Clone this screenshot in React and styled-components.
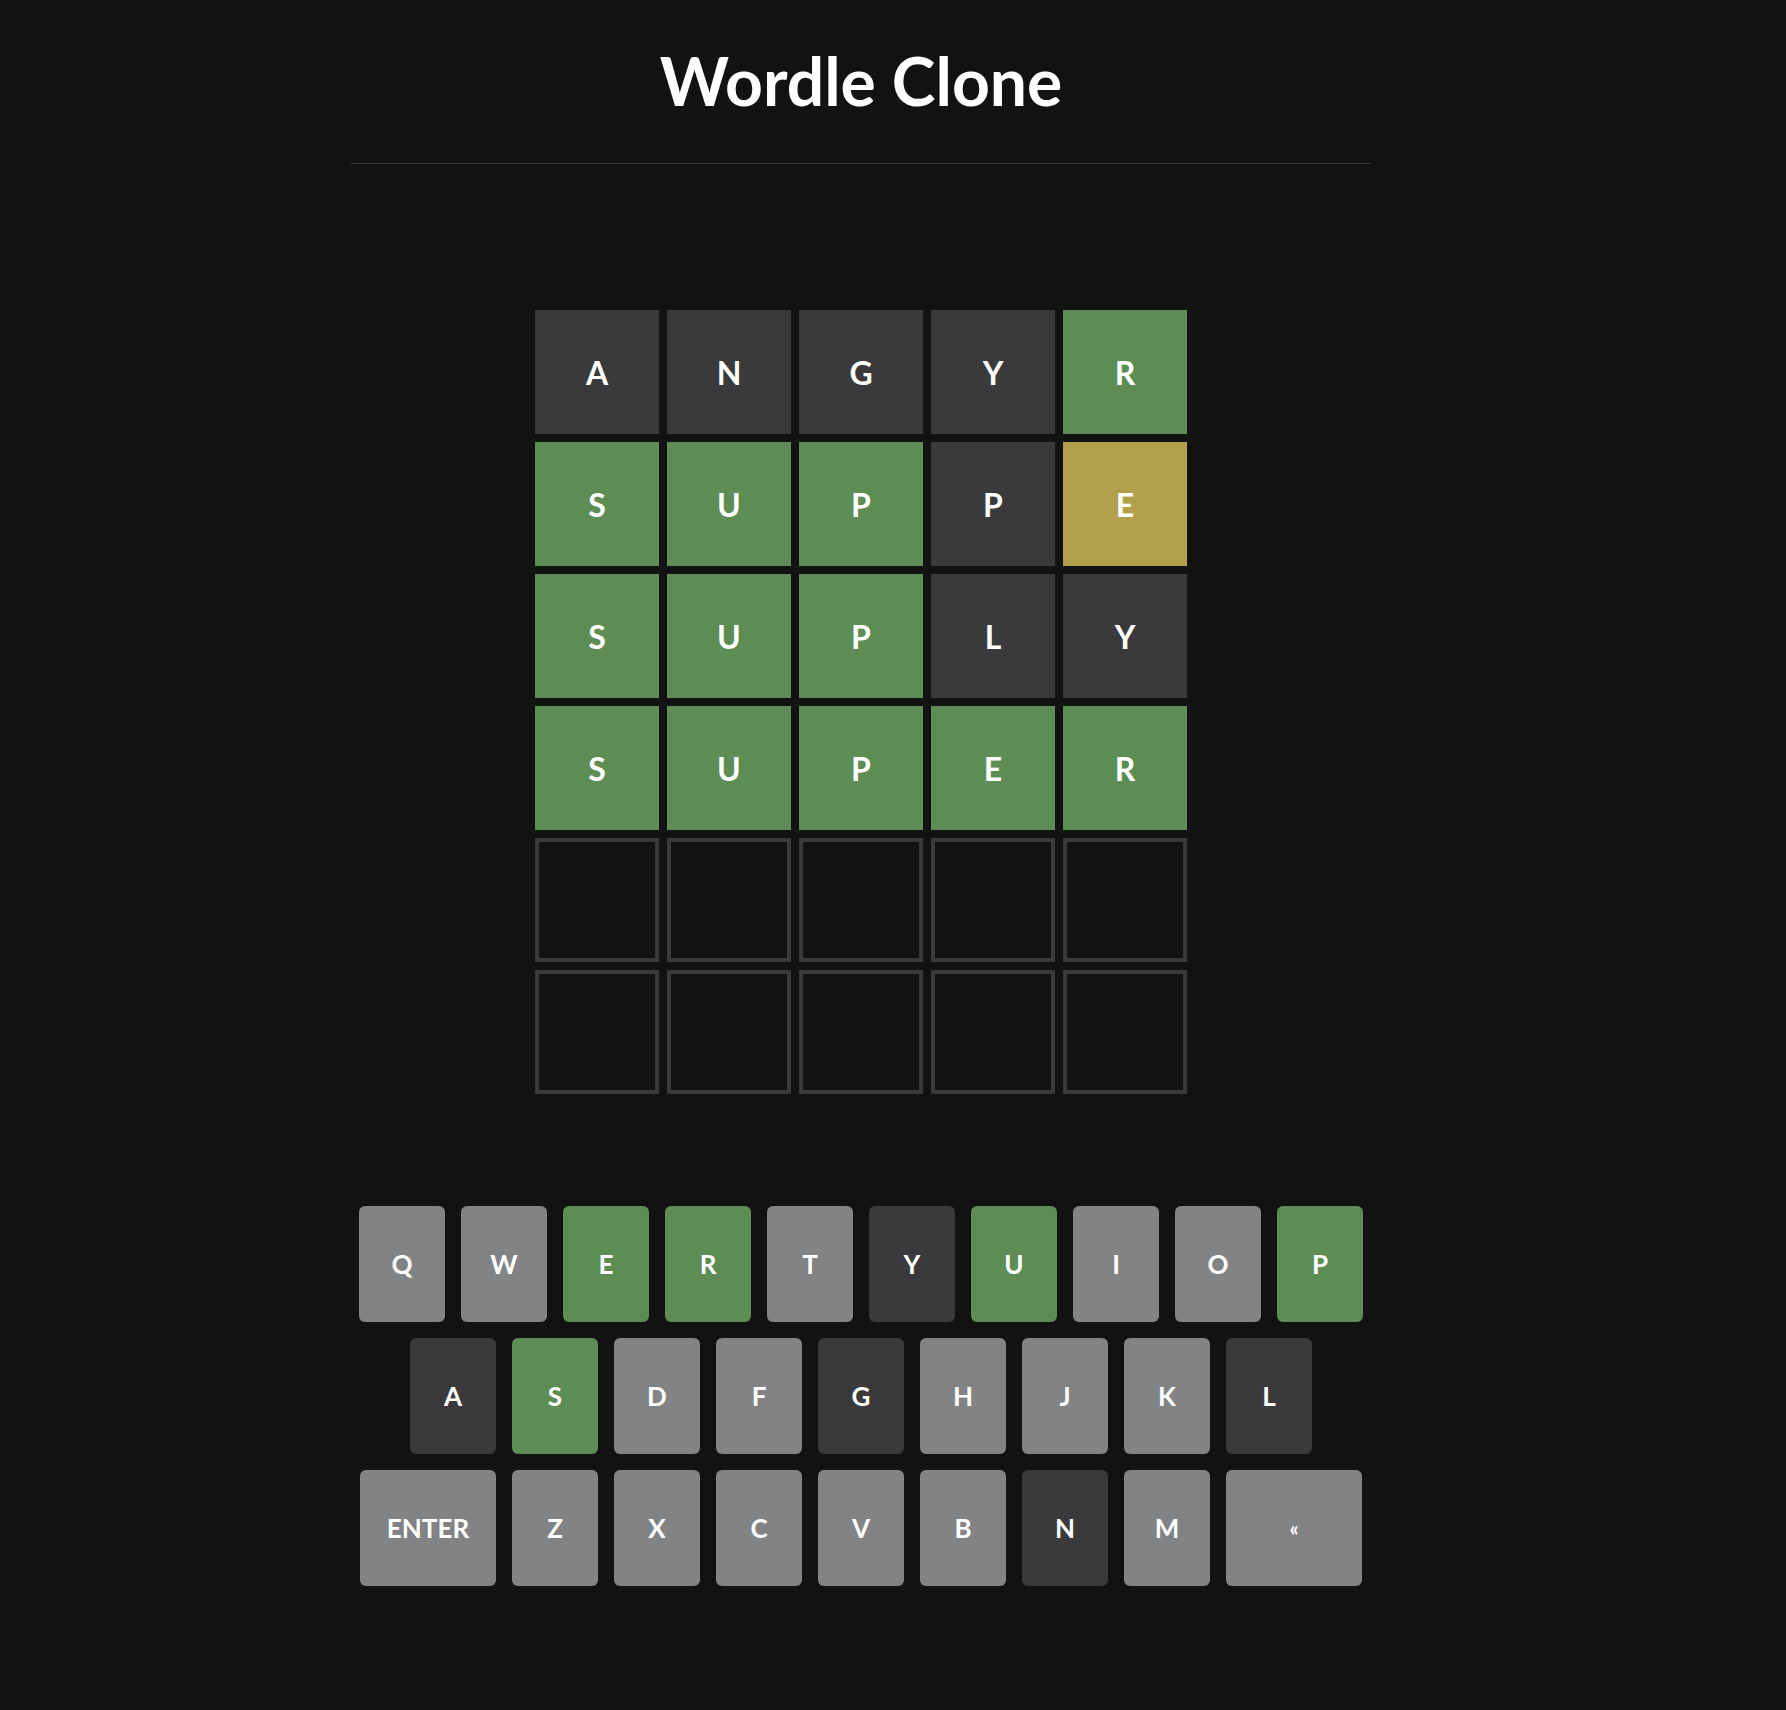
import React from 'react'
import styled, {createGlobalStyle} from "styled-components"

const GlobalStyle=createGlobalStyle`
html,body{
  margin:0;
  padding:0;
  background-color:#121213;
}
body{
  font-family:Lato,"Open Sans","Noto Sans",sans-serif;
  color:#ffffff;
}
`

const colors={
  correct:"#5e8c55",
  present:"#b1a04c",
  absent:"#3a3a3c",
  unused:"#818384",
  empty:"#121213",
}

const Page=styled.div`
width:1722px;
min-height:1710px;
display:flex;
flex-direction:column;
align-items:center;
`

const Header=styled.header`
width:1020px;
border-bottom:1px solid #3a3a3c;
text-align:center;
padding-top:48px;
padding-bottom:49px;
`

const Title=styled.h1`
margin:0;
font-size:66px;
line-height:1;
font-weight:700;
letter-spacing:0px;
`

const Board=styled.div`
margin-top:146px;
display:grid;
grid-template-columns:repeat(5,124px);
grid-auto-rows:124px;
gap:8px;
`

const Tile=styled.div`
box-sizing:border-box;
display:flex;
align-items:center;
justify-content:center;
font-size:32px;
font-weight:700;
background-color:${props=>colors[props.state]};
border:${props=>props.state==="empty"?"4px solid #3a3a3c":"none"};
`

const Keyboard=styled.div`
margin-top:112px;
display:flex;
flex-direction:column;
align-items:center;
gap:16px;
`

const KeyRow=styled.div`
display:flex;
gap:16px;
`

const Key=styled.button`
width:${props=>props.wide?"136px":"86px"};
height:116px;
border:none;
border-radius:6px;
padding:0;
display:flex;
align-items:center;
justify-content:center;
font-family:Lato,"Open Sans",sans-serif;
font-size:${props=>props.small?"20px":"26px"};
font-weight:700;
color:#ffffff;
background-color:${props=>colors[props.state]};
cursor:pointer;
`

const guesses=[
  [["A","absent"],["N","absent"],["G","absent"],["Y","absent"],["R","correct"]],
  [["S","correct"],["U","correct"],["P","correct"],["P","absent"],["E","present"]],
  [["S","correct"],["U","correct"],["P","correct"],["L","absent"],["Y","absent"]],
  [["S","correct"],["U","correct"],["P","correct"],["E","correct"],["R","correct"]],
]

const keyStates={
  E:"correct",R:"correct",U:"correct",P:"correct",S:"correct",
  Y:"absent",A:"absent",G:"absent",L:"absent",N:"absent",
}

const keyRows=[
  ["Q","W","E","R","T","Y","U","I","O","P"],
  ["A","S","D","F","G","H","J","K","L"],
  ["ENTER","Z","X","C","V","B","N","M","«"],
]

const App = () => {
    const cells=[]
    for(let r=0;r<6;r++){
        for(let c=0;c<5;c++){
            const g=guesses[r]
            cells.push(g?{letter:g[c][0],state:g[c][1]}:{letter:"",state:"empty"})
        }
    }
    return (
        <Page>
            <GlobalStyle/>
            <Header>
                <Title>Wordle Clone</Title>
            </Header>
            <Board>
                {cells.map((cell,i)=>(
                    <Tile key={i} state={cell.state}>{cell.letter}</Tile>
                ))}
            </Board>
            <Keyboard>
                {keyRows.map((row,ri)=>(
                    <KeyRow key={ri}>
                        {row.map(k=>(
                            <Key key={k}
                                wide={k==="ENTER"||k==="«"}
                                small={k==="«"}
                                state={keyStates[k]||"unused"}>
                                {k}
                            </Key>
                        ))}
                    </KeyRow>
                ))}
            </Keyboard>
        </Page>
    )
}

export default App
